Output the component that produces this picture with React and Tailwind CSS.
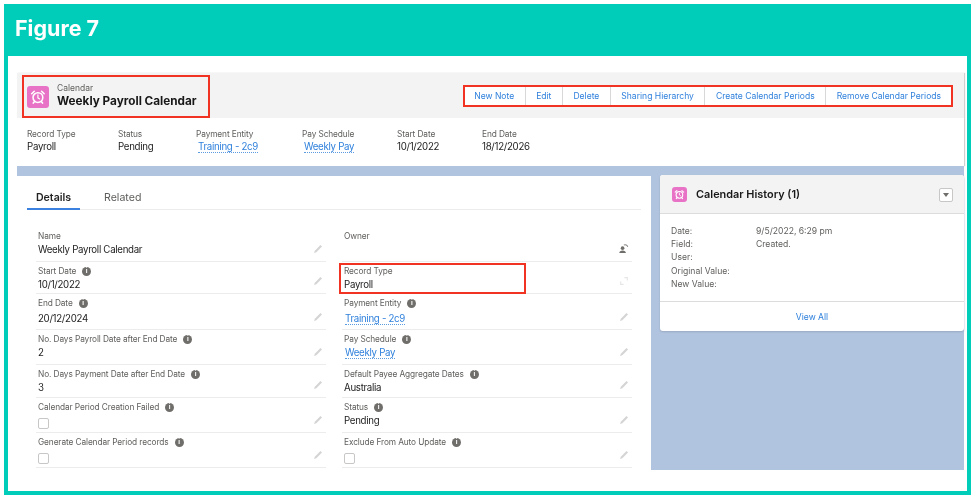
import React from "react";

const font = { fontFamily: "Inter, 'Noto Sans', sans-serif" };

function Clock({ box }) {
  return (
    <div className={`flex items-center justify-center rounded-[3px] bg-[#e873c6] ${box}`}>
      <svg viewBox="0 0 24 24" className="h-[72%] w-[72%]" fill="none" stroke="#fff" strokeWidth="2.4" strokeLinecap="round">
        <circle cx="12" cy="13" r="7.4" />
        <path d="M12 9v4.4l2.6 1.6" strokeWidth="1.8" />
        <path d="M2.6 7.2 6.4 3.4M21.4 7.2l-3.8-3.8M6.6 19.4 5 21.4M17.4 19.4l1.6 2" />
      </svg>
    </div>
  );
}

function Info() {
  return (
    <span className="ml-[6px] flex h-[9px] w-[9px] items-center justify-center rounded-full bg-[#706e6b] text-[6.5px] leading-none font-bold text-white">
      i
    </span>
  );
}

function Pencil() {
  return (
    <svg viewBox="0 0 12 12" className="h-[10px] w-[10px]">
      <path d="M9 1.2 10.8 3 4 9.8 1.2 10.8 2.2 8Z" fill="#d4d4d4" />
    </svg>
  );
}

function OwnerIcon() {
  return (
    <svg viewBox="0 0 12 12" className="h-[11px] w-[11px]">
      <circle cx="5" cy="5.6" r="2" fill="#706e6b" />
      <path d="M1.4 11c0-2 1.6-2.9 3.6-2.9S8.600 9 8.600 11Z" fill="#706e6b" />
      <path d="M6.400 2.200c1.800-.8 3.600 0 4.200 2" fill="none" stroke="#8a8886" strokeWidth="1.100" />
    </svg>
  );
}

function SwapIcon() {
  return (
    <svg viewBox="0 0 12 12" className="h-[10px] w-[10px]" fill="none" stroke="#e6e6e6" strokeWidth="1.400">
      <path d="M2 6.500V10h3.500M10 5.500V2H6.500" />
    </svg>
  );
}

function Check() {
  return <div className="mt-[4px] h-[11px] w-[11px] rounded-[2px] border border-[#c9c7c5] bg-white" />;
}

function Row({ label, value, link, info, check, h, icon, low }) {
  return (
    <div className={`relative flex w-[290px] flex-col border-b border-[#ececec] pl-[2px] ${h}`}>
      <div className="mt-[2px] flex h-[14px] items-center text-[8.3px] leading-none tracking-[-0.1px] text-[#5f5e5c]">
        {label}
        {info && <Info />}
      </div>
      {check ? (
        <Check />
      ) : value ? (
        <div className={`text-[9.7px] leading-[14px] tracking-[-0.3px] text-[#232323] ${low ? "mt-[2px]" : ""}`}>
          {link ? (
            <span className="ml-px border-b border-dotted border-[#5b9be0] text-[#2f80dc]">{value}</span>
          ) : (
            value
          )}
        </div>
      ) : null}
      <div className="absolute right-[3px] bottom-[7px]">{icon || <Pencil />}</div>
    </div>
  );
}

function Hl({ label, value, link, w }) {
  return (
    <div className={`flex flex-col ${w}`}>
      <div className="text-[8.3px] leading-[12px] tracking-[-0.1px] text-[#5f5e5c]">{label}</div>
      <div className="text-[9.7px] leading-[14px] tracking-[-0.3px] text-[#232323]">
        {link ? (
          <span className="ml-[2px] border-b border-dotted border-[#5b9be0] text-[#2f80dc]">{value}</span>
        ) : (
          value
        )}
      </div>
    </div>
  );
}

function Act({ children, cls }) {
  return (
    <div className={`flex h-full items-center pt-px text-[8.55px] text-[#2f80dc] ${cls}`}>
      {children}
    </div>
  );
}

const mid = "border-r border-[#d8d8d8] px-[10.500px]";

const left = [
  { label: "Name", value: "Weekly Payroll Calendar", h: "h-[35px]" },
  { label: "Start Date", value: "10/1/2022", info: true, h: "h-[32px]" },
  { label: "End Date", value: "20/12/2024", info: true, low: true, h: "h-[36px]" },
  { label: "No. Days Payroll Date after End Date", value: "2", info: true, h: "h-[35px]" },
  { label: "No. Days Payment Date after End Date", value: "3", info: true, h: "h-[33px]" },
  { label: "Calendar Period Creation Failed", check: true, info: true, h: "h-[35px]" },
  { label: "Generate Calendar Period records", check: true, info: true, h: "h-[35px]" },
];

const right = [
  { label: "Owner", h: "h-[35px]", icon: <OwnerIcon /> },
  { label: "Record Type", value: "Payroll", h: "h-[32px]", icon: <SwapIcon /> },
  { label: "Payment Entity", value: "Training - 2c9", link: true, info: true, low: true, h: "h-[36px]" },
  { label: "Pay Schedule", value: "Weekly Pay", link: true, info: true, h: "h-[35px]" },
  { label: "Default Payee Aggregate Dates", value: "Australia", info: true, h: "h-[33px]" },
  { label: "Status", value: "Pending", info: true, h: "h-[35px]" },
  { label: "Exclude From Auto Update", check: true, info: true, h: "h-[35px]" },
];

export default function App() {
  return (
    <div className="h-[500px] w-[976px] bg-white p-1" style={font}>
      <div className="flex h-[491px] w-[967px] flex-col bg-[#00cdb9] blur-[0.3px]">
        <div className="flex h-[52px] items-center pb-[2px] pl-[11px] text-[21.500px] leading-none font-bold text-white">Figure 7</div>
        <div className="mx-[4px] mb-[4px] flex-1 bg-white pt-[17px] pl-[9px]">
          <div className="w-[947px] shadow-[1px_0_1px_#d0d0d0]">
            <div className="flex h-[45px] items-center justify-between bg-[#f3f3f3] pr-[11px]">
              <div className="ml-[5px] flex h-[43px] w-[188px] items-center self-end border-2 border-[#f03322] pl-[3px]">
                <Clock box="h-[22px] w-[22px]" />
                <div className="ml-[8px] flex -translate-y-px flex-col">
                  <div className="text-[8.5px] leading-[11px] text-[#5f5e5c]">Calendar</div>
                  <div className="text-[11.750px] leading-[14px] font-bold text-[#181818]">Weekly Payroll Calendar</div>
                </div>
              </div>
              <div className="flex h-[22px] items-center border-2 border-[#f03322] bg-white">
                <Act cls={`${mid} !pl-[9px]`}>New Note</Act>
                <Act cls={mid}>Edit</Act>
                <Act cls={mid}>Delete</Act>
                <Act cls={mid}>Sharing Hierarchy</Act>
                <Act cls={mid}>Create Calendar Periods</Act>
                <Act cls="pr-[10px] pl-[10.500px]">Remove Calendar Periods</Act>
              </div>
            </div>
            <div className="flex h-[48px] bg-white pt-[10px] pl-[10px]">
              <Hl label="Record Type" value="Payroll" w="w-[91px]" />
              <Hl label="Status" value="Pending" w="w-[78px]" />
              <Hl label="Payment Entity" value="Training - 2c9" link w="w-[106px]" />
              <Hl label="Pay Schedule" value="Weekly Pay" link w="w-[95px]" />
              <Hl label="Start Date" value="10/1/2022" w="w-[85px]" />
              <Hl label="End Date" value="18/12/2026" w="w-[80px]" />
            </div>
          </div>
          <div className="flex h-[304px] w-[947px] bg-[#b0c4df]">
            <div className="mt-[10px] w-[634px] bg-white">
              <div className="mx-[10px] flex h-[34px] items-end border-b border-[#ececec] text-[10.600px]">
                <div className="-mb-px flex h-full w-[53px] items-center justify-center border-b-2 border-[#3b82e0] pt-[10px] font-semibold text-[#232323]">Details</div>
                <div className="ml-[24px] flex h-full items-center pt-[10px] text-[#5f5e5c]">Related</div>
              </div>
              <div className="mt-[17px] flex pl-[19px]">
                <div className="flex flex-col">
                  {left.map((r) => <Row key={r.label} {...r} />)}
                </div>
                <div className="relative ml-[16px] flex flex-col">
                  {right.map((r) => <Row key={r.label} {...r} />)}
                  <div className="absolute top-[36px] -left-[3px] h-[31px] w-[187px] border-2 border-[#f03322]" />
                </div>
              </div>
            </div>
            <div className="mt-[9px] ml-[9px] h-[156px] w-[304px] rounded-[3px] bg-white shadow-[0_1px_2px_#9aa9c0]">
              <div className="flex h-[39px] items-center rounded-t-[3px] border-b border-[#dcdcdc] bg-[#f3f3f3] pt-[1px] pr-[11px] pl-[12px]">
                <Clock box="h-[15px] w-[15px]" />
                <div className="ml-[9px] flex-1 text-[10.900px] font-semibold text-[#181818]">Calendar History (1)</div>
                <div className="flex h-[14px] w-[14px] items-center justify-center rounded-[2px] border border-[#c9c7c5] bg-white">
                  <div className="h-0 w-0 border-x-[3.500px] border-t-[4px] border-x-transparent border-t-[#706e6b]" />
                </div>
              </div>
              <div className="grid h-[88px] grid-cols-[85px_1fr] content-start border-b border-[#dcdcdc] pt-[10.500px] pl-[11px] text-[8.600px] leading-[13.400px] text-[#5f5e5c]">
                <div>Date:</div><div>9/5/2022, 6:29 pm</div>
                <div>Field:</div><div>Created.</div>
                <div className="col-span-2">User:</div>
                <div className="col-span-2">Original Value:</div>
                <div className="col-span-2">New Value:</div>
              </div>
              <div className="flex h-[29px] items-center justify-center pt-px text-[8.600px] text-[#2f80dc]">View All</div>
            </div>
          </div>
        </div>
      </div>
    </div>
  );
}
